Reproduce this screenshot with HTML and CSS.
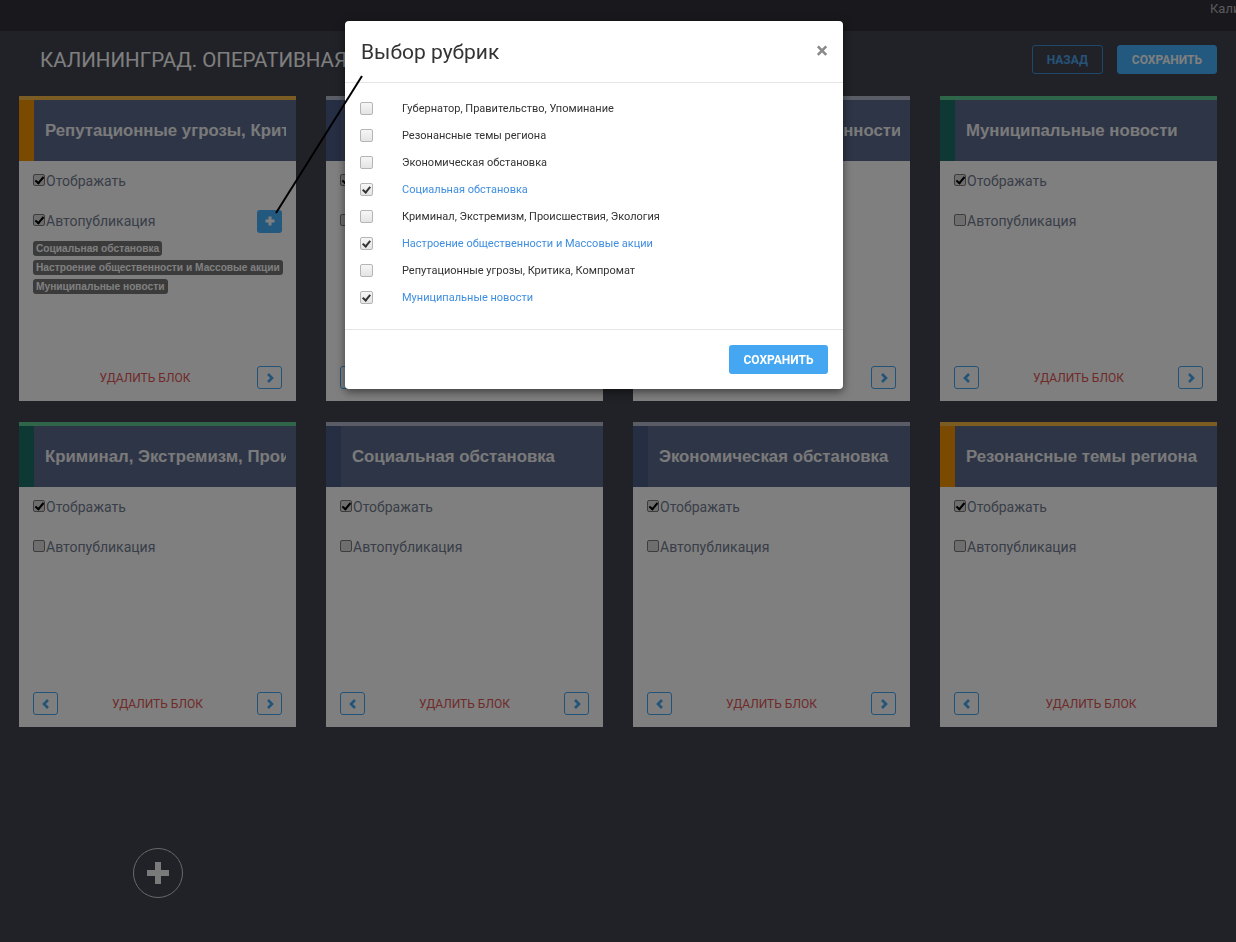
FILE: index.html
```html
<!DOCTYPE html>
<html lang="ru">
<head>
<meta charset="utf-8">
<title>Калининград. Оперативная сводка</title>
<link rel="stylesheet" href="styles.css">
</head>
<body>
<div class="topbar"><div class="user">Калининград</div></div>

<div class="header">
  <h1 class="title">Калининград. Оперативная сводка</h1>
  <div class="actions">
    <button class="btn btn-outline">Назад</button>
    <button class="btn btn-primary">Сохранить</button>
  </div>
</div>

<div class="grid">
  <div class="card c-orange">
    <div class="card-head"><div class="stripe"></div><div class="card-title">Репутационные угрозы, Критика, Компромат</div></div>
    <div class="card-body">
      <div class="row"><span class="cb on"></span>Отображать</div>
      <div class="row"><span class="cb on"></span>Автопубликация<button class="plus"><svg width="10" height="10" viewBox="0 0 10 10"><path d="M5 0.5V9.5M0.5 5H9.5" stroke="#fff" stroke-width="3"/></svg></button></div>
      <div class="tags">
        <span class="tag">Социальная обстановка</span>
        <span class="tag">Настроение общественности и Массовые акции</span>
        <span class="tag">Муниципальные новости</span>
      </div>
      <div class="foot"><span class="del">Удалить блок</span><button class="nav"><svg width="10" height="12" viewBox="0 0 10 12"><polyline points="3,2 7,6 3,10" fill="none" stroke="#45a7f2" stroke-width="2.6"/></svg></button></div>
    </div>
  </div>

  <div class="card c-gray">
    <div class="card-head"><div class="stripe"></div><div class="card-title">Губернатор, Правительство, Упоминание</div></div>
    <div class="card-body">
      <div class="row"><span class="cb on"></span>Отображать</div>
      <div class="row"><span class="cb"></span>Автопубликация</div>
      <div class="foot"><button class="nav"><svg width="10" height="12" viewBox="0 0 10 12"><polyline points="7,2 3,6 7,10" fill="none" stroke="#45a7f2" stroke-width="2.6"/></svg></button><span class="del">Удалить блок</span><button class="nav"><svg width="10" height="12" viewBox="0 0 10 12"><polyline points="3,2 7,6 3,10" fill="none" stroke="#45a7f2" stroke-width="2.6"/></svg></button></div>
    </div>
  </div>

  <div class="card c-gray">
    <div class="card-head"><div class="stripe"></div><div class="card-title">Настроение общественности и Массовые акции</div></div>
    <div class="card-body">
      <div class="row"><span class="cb on"></span>Отображать</div>
      <div class="row"><span class="cb"></span>Автопубликация</div>
      <div class="foot"><button class="nav"><svg width="10" height="12" viewBox="0 0 10 12"><polyline points="7,2 3,6 7,10" fill="none" stroke="#45a7f2" stroke-width="2.6"/></svg></button><span class="del">Удалить блок</span><button class="nav"><svg width="10" height="12" viewBox="0 0 10 12"><polyline points="3,2 7,6 3,10" fill="none" stroke="#45a7f2" stroke-width="2.6"/></svg></button></div>
    </div>
  </div>

  <div class="card c-green">
    <div class="card-head"><div class="stripe"></div><div class="card-title">Муниципальные новости</div></div>
    <div class="card-body">
      <div class="row"><span class="cb on"></span>Отображать</div>
      <div class="row"><span class="cb"></span>Автопубликация</div>
      <div class="foot"><button class="nav"><svg width="10" height="12" viewBox="0 0 10 12"><polyline points="7,2 3,6 7,10" fill="none" stroke="#45a7f2" stroke-width="2.6"/></svg></button><span class="del">Удалить блок</span><button class="nav"><svg width="10" height="12" viewBox="0 0 10 12"><polyline points="3,2 7,6 3,10" fill="none" stroke="#45a7f2" stroke-width="2.6"/></svg></button></div>
    </div>
  </div>

  <div class="card c-green">
    <div class="card-head"><div class="stripe"></div><div class="card-title">Криминал, Экстремизм, Происшествия, Экология</div></div>
    <div class="card-body">
      <div class="row"><span class="cb on"></span>Отображать</div>
      <div class="row"><span class="cb"></span>Автопубликация</div>
      <div class="foot"><button class="nav"><svg width="10" height="12" viewBox="0 0 10 12"><polyline points="7,2 3,6 7,10" fill="none" stroke="#45a7f2" stroke-width="2.6"/></svg></button><span class="del">Удалить блок</span><button class="nav"><svg width="10" height="12" viewBox="0 0 10 12"><polyline points="3,2 7,6 3,10" fill="none" stroke="#45a7f2" stroke-width="2.6"/></svg></button></div>
    </div>
  </div>

  <div class="card c-gray">
    <div class="card-head"><div class="stripe"></div><div class="card-title">Социальная обстановка</div></div>
    <div class="card-body">
      <div class="row"><span class="cb on"></span>Отображать</div>
      <div class="row"><span class="cb"></span>Автопубликация</div>
      <div class="foot"><button class="nav"><svg width="10" height="12" viewBox="0 0 10 12"><polyline points="7,2 3,6 7,10" fill="none" stroke="#45a7f2" stroke-width="2.6"/></svg></button><span class="del">Удалить блок</span><button class="nav"><svg width="10" height="12" viewBox="0 0 10 12"><polyline points="3,2 7,6 3,10" fill="none" stroke="#45a7f2" stroke-width="2.6"/></svg></button></div>
    </div>
  </div>

  <div class="card c-gray">
    <div class="card-head"><div class="stripe"></div><div class="card-title">Экономическая обстановка</div></div>
    <div class="card-body">
      <div class="row"><span class="cb on"></span>Отображать</div>
      <div class="row"><span class="cb"></span>Автопубликация</div>
      <div class="foot"><button class="nav"><svg width="10" height="12" viewBox="0 0 10 12"><polyline points="7,2 3,6 7,10" fill="none" stroke="#45a7f2" stroke-width="2.6"/></svg></button><span class="del">Удалить блок</span><button class="nav"><svg width="10" height="12" viewBox="0 0 10 12"><polyline points="3,2 7,6 3,10" fill="none" stroke="#45a7f2" stroke-width="2.6"/></svg></button></div>
    </div>
  </div>

  <div class="card c-orange">
    <div class="card-head"><div class="stripe"></div><div class="card-title">Резонансные темы региона</div></div>
    <div class="card-body">
      <div class="row"><span class="cb on"></span>Отображать</div>
      <div class="row"><span class="cb"></span>Автопубликация</div>
      <div class="foot"><button class="nav"><svg width="10" height="12" viewBox="0 0 10 12"><polyline points="7,2 3,6 7,10" fill="none" stroke="#45a7f2" stroke-width="2.6"/></svg></button><span class="del">Удалить блок</span></div>
    </div>
  </div>
</div>

<button class="add"><svg width="22" height="22" viewBox="0 0 22 22"><path d="M11 0V22M0 11H22" stroke="#f4f4f4" stroke-width="6"/></svg></button>

<div class="backdrop"></div>

<div class="modal">
  <div class="modal-head">
    <h2 class="modal-title">Выбор рубрик</h2>
    <span class="close">×</span>
  </div>
  <div class="modal-body">
    <div class="item"><span class="mcb"></span>Губернатор, Правительство, Упоминание</div>
    <div class="item"><span class="mcb"></span>Резонансные темы региона</div>
    <div class="item"><span class="mcb"></span>Экономическая обстановка</div>
    <div class="item sel"><span class="mcb on"></span>Социальная обстановка</div>
    <div class="item"><span class="mcb"></span>Криминал, Экстремизм, Происшествия, Экология</div>
    <div class="item sel"><span class="mcb on"></span>Настроение общественности и Массовые акции</div>
    <div class="item"><span class="mcb"></span>Репутационные угрозы, Критика, Компромат</div>
    <div class="item sel"><span class="mcb on"></span>Муниципальные новости</div>
  </div>
  <div class="modal-foot">
    <button class="btn btn-save">Сохранить</button>
  </div>
</div>

<svg class="pointer" width="1236" height="942" viewBox="0 0 1236 942"><line x1="276" y1="213" x2="362" y2="76" stroke="#000" stroke-width="2"/></svg>
</body>
</html>
```

FILE: styles.css
```css
* { box-sizing: border-box; }

body {
  margin: 0;
  height: 942px;
  overflow: hidden;
  background: #42444e;
  font-family: Roboto, "Liberation Sans", sans-serif;
}

button { font-family: inherit; cursor: pointer; }

.topbar {
  height: 31px;
  background: #32303a;
  display: flex;
  justify-content: flex-end;
}

.user {
  width: 26px;
  overflow: hidden;
  white-space: nowrap;
  color: #b4b4b4;
  font-size: 13px;
  line-height: 18px;
}

.header {
  display: flex;
  align-items: center;
  justify-content: space-between;
  padding: 14px 19px 22px 40px;
}

.title {
  margin: 0;
  font-size: 20.5px;
  font-weight: 400;
  color: #fff;
  text-transform: uppercase;
  white-space: nowrap;
}

.actions { display: flex; gap: 14px; }

.btn {
  height: 29px;
  padding: 0 14px;
  border-radius: 3px;
  font-size: 12px;
  font-weight: 700;
  text-transform: uppercase;
}

.btn-outline {
  background: transparent;
  border: 1px solid #3d8fd8;
  color: #4ea6f0;
}

.btn-primary {
  background: #46b0ff;
  border: 1px solid #46b0ff;
  color: #fff;
}

.grid {
  display: grid;
  grid-template-columns: repeat(4, 277px);
  column-gap: 30px;
  row-gap: 21px;
  padding: 0 19px;
}

.card {
  height: 305px;
  background: #fff;
  border-top: 4px solid #b4b8cc;
  display: flex;
  flex-direction: column;
}

.card-head {
  height: 61px;
  flex: none;
  background: #5c6a8e;
  display: flex;
}

.stripe { width: 15px; flex: none; background: #4d5d88; }

.c-orange { border-top-color: #f6b844; }
.c-orange .stripe { background: #f49400; }
.c-green { border-top-color: #5ecc92; }
.c-green .stripe { background: #1a7066; }

.card-title {
  flex: 1;
  min-width: 0;
  margin-right: 10px;
  padding-left: 11px;
  font-family: "Liberation Sans", Arial, sans-serif;
  font-weight: 700;
  font-size: 16.8px;
  line-height: 61px;
  color: #f4f4f4;
  white-space: nowrap;
  overflow: hidden;
}

.card-body {
  flex: 1;
  padding: 0 14px 12px;
  display: flex;
  flex-direction: column;
}

.row {
  height: 40px;
  display: flex;
  align-items: center;
  font-size: 14px;
  color: #727c90;
}

.cb {
  position: relative;
  width: 12px;
  height: 12px;
  margin: -3px 1px 0 0;
  border: 1px solid #7a7a7a;
  border-radius: 2px;
  background: #dcdcdc;
  flex: none;
}

.cb.on::after {
  content: "";
  position: absolute;
  left: 3px;
  top: 0;
  width: 3px;
  height: 7px;
  border: solid #000;
  border-width: 0 2px 2px 0;
  transform: rotate(40deg);
}

.plus {
  margin-left: auto;
  width: 25px;
  height: 23px;
  border: 0;
  border-radius: 3px;
  background: #46b0ff;
  display: flex;
  align-items: center;
  justify-content: center;
  padding: 0;
}

.tags {
  display: flex;
  flex-direction: column;
  align-items: flex-start;
  gap: 4px;
}

.tag {
  height: 15px;
  padding: 0 3px;
  border-radius: 3px;
  background: #767676;
  color: #fff;
  font-family: "Liberation Sans", Arial, sans-serif;
  font-weight: 700;
  font-size: 10.2px;
  line-height: 15px;
  white-space: nowrap;
}

.foot {
  margin-top: auto;
  height: 23px;
  display: flex;
  align-items: center;
}

.del {
  flex: 1;
  text-align: center;
  color: #e05454;
  font-size: 12px;
  text-transform: uppercase;
}

.nav {
  width: 25px;
  height: 23px;
  padding: 0;
  border: 1px solid #45a7f2;
  border-radius: 3px;
  background: transparent;
  display: flex;
  align-items: center;
  justify-content: center;
  flex: none;
}

.add {
  display: flex;
  align-items: center;
  justify-content: center;
  width: 50px;
  height: 50px;
  margin: 121px 0 0 133px;
  padding: 0;
  border: 1px solid #d0d0d0;
  border-radius: 50%;
  background: transparent;
}

.backdrop {
  position: fixed;
  inset: 0;
  background: rgba(0, 0, 0, 0.5);
}

.modal {
  position: absolute;
  left: 345px;
  top: 21px;
  width: 498px;
  background: #fff;
  border-radius: 4px;
  box-shadow: 0 3px 9px rgba(0, 0, 0, 0.5);
}

.modal-head {
  height: 62px;
  padding: 0 15px 0 16px;
  display: flex;
  align-items: center;
  justify-content: space-between;
  border-bottom: 1px solid #e5e5e5;
}

.modal-title {
  margin: 0;
  font-size: 21px;
  font-weight: 400;
  color: #333;
}

.close {
  font-size: 22px;
  font-weight: 700;
  color: #8a8a8a;
  line-height: 1;
  margin-top: -2px;
}

.modal-body { padding: 12px 15px 18px; }

.item {
  height: 27px;
  display: flex;
  align-items: center;
  font-size: 11px;
  color: #333;
}

.item.sel { color: #3f8ee0; }

.mcb {
  position: relative;
  width: 13px;
  height: 13px;
  margin-right: 29px;
  border: 1px solid #b5b5b5;
  border-radius: 2px;
  background: linear-gradient(#f6f6f6, #e4e4e4);
  flex: none;
}

.mcb.on::after {
  content: "";
  position: absolute;
  left: 3px;
  top: 1px;
  width: 3px;
  height: 6px;
  border: solid #333;
  border-width: 0 2px 2px 0;
  transform: rotate(40deg);
}

.modal-foot {
  border-top: 1px solid #e5e5e5;
  padding: 15px;
  display: flex;
  justify-content: flex-end;
}

.btn-save {
  width: 99px;
  padding: 0;
  border: 0;
  background: #45a7f2;
  color: #fff;
}

.pointer {
  position: absolute;
  left: 0;
  top: 0;
  pointer-events: none;
}
```
